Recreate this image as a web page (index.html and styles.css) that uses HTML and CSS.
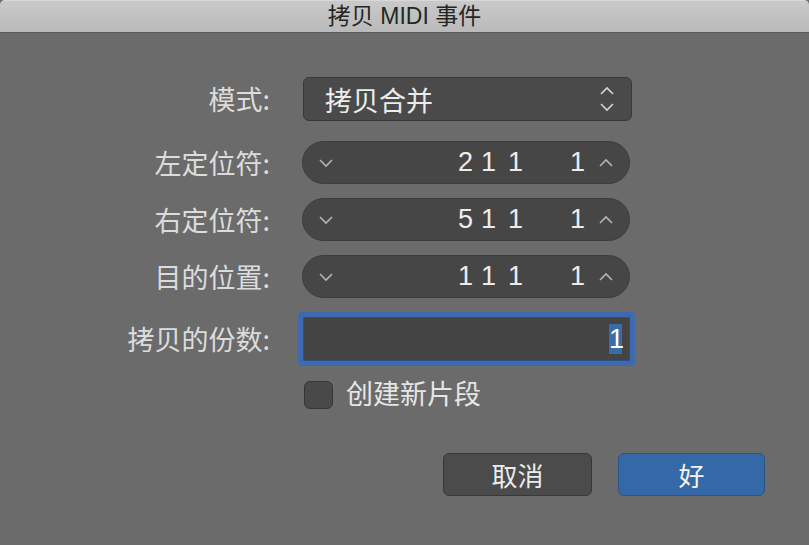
FILE: index.html
```html
<!DOCTYPE html>
<html>
<head>
    <title>拷贝 MIDI 事件</title>
    <link rel="stylesheet" href="styles.css">
</head>
<body>
    <div class="window">
        <div class="titlebar">拷贝 MIDI 事件</div>

        <div class="form">
            <div class="row row-mode">
                <label class="label">模式:</label>
                <div class="popup">
                    <span class="popup-text">拷贝合并</span>
                    <svg class="popup-arrows" width="16" height="26" viewBox="0 0 16 26">
                        <polyline points="2,8 8,2 14,8" fill="none" stroke="#d4d4d4" stroke-width="1.6"/>
                        <polyline points="2,18 8,24 14,18" fill="none" stroke="#d4d4d4" stroke-width="1.6"/>
                    </svg>
                </div>
            </div>

            <div class="row">
                <label class="label">左定位符:</label>
                <div class="stepper">
                    <svg class="chev" width="16" height="10" viewBox="0 0 16 10"><polyline points="2,2 8,8 14,2" fill="none" stroke="#b4b4b4" stroke-width="1.6"/></svg>
                    <div class="digits"><span class="seg s1">2</span><span class="seg s2">1</span><span class="seg s3">1</span><span class="seg s4">1</span></div>
                    <svg class="chev" width="16" height="10" viewBox="0 0 16 10"><polyline points="2,8 8,2 14,8" fill="none" stroke="#b4b4b4" stroke-width="1.6"/></svg>
                </div>
            </div>

            <div class="row">
                <label class="label">右定位符:</label>
                <div class="stepper">
                    <svg class="chev" width="16" height="10" viewBox="0 0 16 10"><polyline points="2,2 8,8 14,2" fill="none" stroke="#b4b4b4" stroke-width="1.6"/></svg>
                    <div class="digits"><span class="seg s1">5</span><span class="seg s2">1</span><span class="seg s3">1</span><span class="seg s4">1</span></div>
                    <svg class="chev" width="16" height="10" viewBox="0 0 16 10"><polyline points="2,8 8,2 14,8" fill="none" stroke="#b4b4b4" stroke-width="1.6"/></svg>
                </div>
            </div>

            <div class="row">
                <label class="label">目的位置:</label>
                <div class="stepper">
                    <svg class="chev" width="16" height="10" viewBox="0 0 16 10"><polyline points="2,2 8,8 14,2" fill="none" stroke="#b4b4b4" stroke-width="1.6"/></svg>
                    <div class="digits"><span class="seg s1">1</span><span class="seg s2">1</span><span class="seg s3">1</span><span class="seg s4">1</span></div>
                    <svg class="chev" width="16" height="10" viewBox="0 0 16 10"><polyline points="2,8 8,2 14,8" fill="none" stroke="#b4b4b4" stroke-width="1.6"/></svg>
                </div>
            </div>

            <div class="row row-copies">
                <label class="label">拷贝的份数:</label>
                <div class="textfield"><span class="selected">1</span></div>
            </div>

            <div class="row row-check">
                <span class="label"></span>
                <div class="check">
                    <span class="checkbox"></span>
                    <span class="check-text">创建新片段</span>
                </div>
            </div>
        </div>

        <div class="buttons">
            <button class="btn">取消</button>
            <button class="btn btn-default">好</button>
        </div>
    </div>
</body>
</html>
```

FILE: styles.css
```css
body {
    margin: 0;
    background-color: #6b6b6b;
    font-family: "Liberation Sans", "Noto Sans CJK SC", sans-serif;
    color: #e6e6e6;
}

.window {
    width: 809px;
    height: 545px;
}

.titlebar {
    height: 33px;
    box-sizing: border-box;
    background: linear-gradient(#c9c9c9, #bababa);
    border-top: 1px solid #d8d8d8;
    border-bottom: 1px solid #5a5a5a;
    border-radius: 5px 5px 0 0;
    color: #262626;
    font-size: 23px;
    line-height: 31px;
    text-align: center;
}

.form {
    display: flex;
    flex-direction: column;
    padding-top: 44px;
}

.row {
    display: flex;
    align-items: center;
    gap: 32px;
    margin-bottom: 14px;
}

.row-mode {
    margin-bottom: 20px;
}

.row-copies {
    margin-top: 5px;
    margin-bottom: 20px;
}

.label {
    width: 270px;
    text-align: right;
    font-family: "Noto Sans CJK SC", "Liberation Sans", sans-serif;
    font-size: 27px;
    line-height: 34px;
    color: #dcdcdc;
}

/* popup menu */
.popup {
    width: 329px;
    height: 44px;
    box-sizing: border-box;
    display: flex;
    align-items: center;
    justify-content: space-between;
    padding: 0 16px 0 21px;
    background-color: #4a4a4a;
    border: 1px solid #383838;
    border-radius: 6px;
    margin-left: 1px;
}

.popup-text {
    font-size: 27px;
    color: #ececec;
}

/* position steppers */
.stepper {
    width: 328px;
    height: 43px;
    box-sizing: border-box;
    display: flex;
    align-items: center;
    padding: 0 15px 0 15px;
    background-color: #464646;
    border: 1px solid #3c3c3c;
    border-radius: 22px;
}

.digits {
    flex: 1;
    display: flex;
    justify-content: flex-end;
    margin-right: 13px;
    font-size: 27px;
    color: #ececec;
}

.seg {
    text-align: right;
}

.s1 { width: 25px; }
.s2 { width: 23px; }
.s3 { width: 27px; }
.s4 { width: 62px; }

.chev {
    display: block;
}

/* copies field with focus ring */
.textfield {
    width: 327px;
    height: 44px;
    box-sizing: border-box;
    display: flex;
    align-items: center;
    justify-content: flex-end;
    padding-right: 7px;
    margin-left: 1px;
    background-color: #444444;
    border: 1px solid #2f4f80;
    box-shadow: 0 0 0 5px #3d6ab0;
    border-radius: 1px;
}

.selected {
    display: block;
    width: 13px;
    height: 30px;
    line-height: 31px;
    font-size: 27px;
    text-align: center;
    background-color: #3a6cad;
    color: #ffffff;
}

/* checkbox */
.row-check {
    height: 28px;
}

.check {
    display: flex;
    align-items: center;
    gap: 13px;
    margin-left: 2px;
}

.checkbox {
    width: 29px;
    height: 28px;
    box-sizing: border-box;
    background-color: #494949;
    border: 1px solid #363636;
    border-radius: 6px;
}

.check-text {
    font-size: 27px;
    line-height: 28px;
    color: #e6e6e6;
}

/* dialog buttons */
.buttons {
    display: flex;
    justify-content: flex-end;
    gap: 26px;
    padding-right: 44px;
    margin-top: 30px;
}

.btn {
    width: 149px;
    height: 43px;
    box-sizing: border-box;
    font-family: "Liberation Sans", "Noto Sans CJK SC", sans-serif;
    font-size: 26px;
    color: #ececec;
    background-color: #4b4b4b;
    border: 1px solid #383838;
    border-radius: 6px;
    padding: 0;
}

.btn-default {
    width: 147px;
    background-color: #3468a6;
    border-color: #2a5487;
    color: #f4f4f4;
}
```
